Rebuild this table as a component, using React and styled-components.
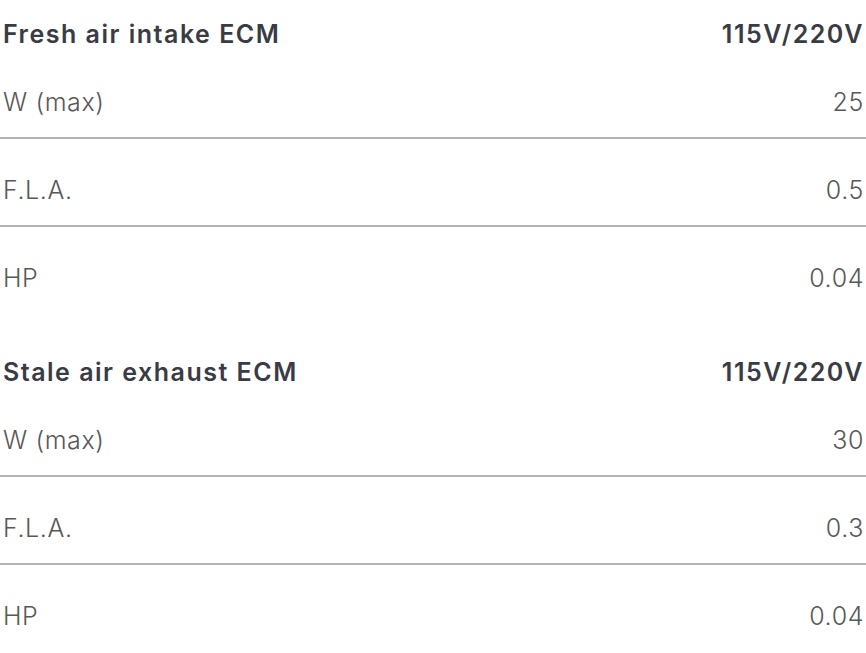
import React from 'react';
import styled, { createGlobalStyle } from 'styled-components';

const GlobalStyle = createGlobalStyle`
  body {
    margin: 0;
    background: #ffffff;
    font-family: 'Inter', 'Liberation Sans', sans-serif;
  }
`;

const Page = styled.div`
  width: 866px;
  display: flex;
  flex-direction: column;
  gap: 23px;
`;

const Section = styled.section`
  display: flex;
  flex-direction: column;
`;

const HeaderRow = styled.div`
  display: flex;
  justify-content: space-between;
  align-items: center;
  padding: 21px 2px 4px 3px;
  line-height: 26px;
  font-size: 25px;
  font-weight: 600;
  letter-spacing: 1.5px;
  color: #393b45;
`;

const Row = styled.div`
  display: flex;
  justify-content: space-between;
  align-items: center;
  padding: 38px 2px 22px 3px;
  line-height: 26px;
  font-size: 25px;
  font-weight: 300;
  letter-spacing: 0.6px;
  color: #585858;
  border-bottom: 2px solid ${props => (props.last ? 'transparent' : '#b3b3b3')};
`;

const specs = [
  {
    title: 'Fresh air intake ECM',
    voltage: '115V/220V',
    rows: [
      ['W (max)', '25'],
      ['F.L.A.', '0.5'],
      ['HP', '0.04'],
    ],
  },
  {
    title: 'Stale air exhaust ECM',
    voltage: '115V/220V',
    rows: [
      ['W (max)', '30'],
      ['F.L.A.', '0.3'],
      ['HP', '0.04'],
    ],
  },
];

export default function App() {
  return (
    <>
      <GlobalStyle />
      <Page>
        {specs.map(spec => (
          <Section key={spec.title}>
            <HeaderRow>
              <span>{spec.title}</span>
              <span>{spec.voltage}</span>
            </HeaderRow>
            {spec.rows.map(([label, value], i) => (
              <Row key={label} last={i === spec.rows.length - 1}>
                <span>{label}</span>
                <span>{value}</span>
              </Row>
            ))}
          </Section>
        ))}
      </Page>
    </>
  );
}
